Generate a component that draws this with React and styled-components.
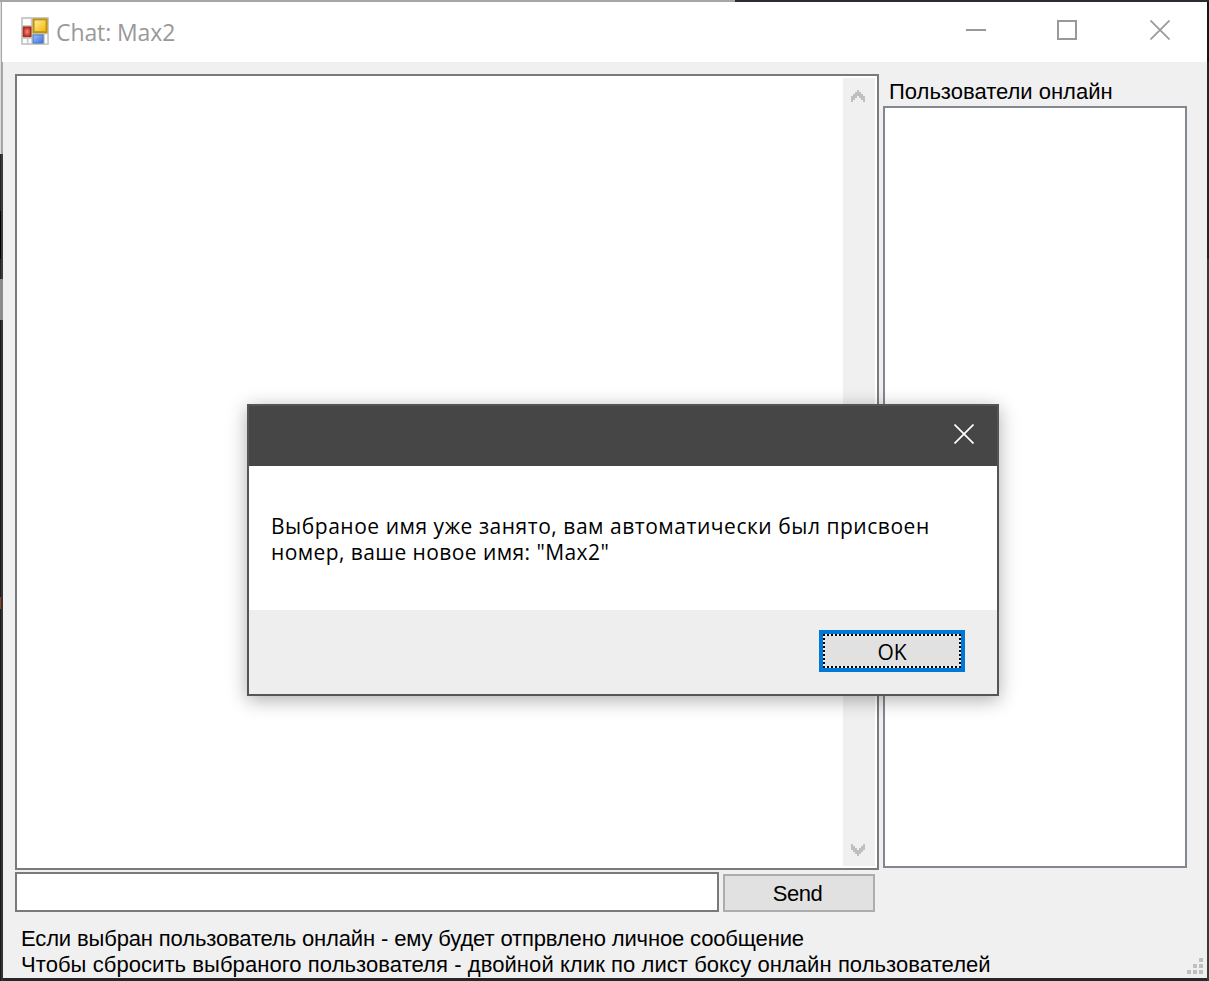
import React from "react";
import styled, { createGlobalStyle } from "styled-components";

const Global = createGlobalStyle`
  *, *::before, *::after { box-sizing: border-box; }
  html, body { margin: 0; padding: 0; overflow: hidden; background: #2b2b2b; }
  button, input { font: inherit; margin: 0; outline: none; border-radius: 0; }
`;

const Desktop = styled.div`
  position: relative;
  width: 1209px;
  height: 981px;
  padding: 2px 2px 3px 2px;
  display: flex;
  background:
    linear-gradient(90deg, #a6a6a6 0 735px, #2b2b33 735px) 0 0 / 100% 2px no-repeat,
    linear-gradient(#dcdcdc 0 154px, #262626 154px 211px, #000 211px 259px, #262626 259px 279px,
      #8c8c8c 279px 320px, #1c1c1c 320px 597px, #8f3f20 597px 609px, #1c1c1c 609px) 0 0 / 1px 100% no-repeat,
    linear-gradient(#a6a6a6 0 154px, #3c3c3c 154px 279px, #8c8c8c 279px 320px, #333 320px) 1px 0 / 2px 100% no-repeat,
    linear-gradient(#151515 0 62px, #262626 62px 259px, #3a3a3a 259px) 100% 0 / 2px 100% no-repeat,
    #262826;
`;

const Window = styled.main`
  flex: 1;
  display: flex;
  flex-direction: column;
`;

const TitleBar = styled.header`
  height: 60px;
  flex: none;
  display: flex;
  align-items: center;
  padding: 0 37px 0 19px;
  background: #fff;
`;

const AppIcon = styled.svg`
  display: block;
  flex: none;
  width: 28px;
  height: 28px;
  margin-top: -2px;
`;

const Title = styled.h1`
  flex: 1;
  margin: 0 0 0 7px;
  font: 400 23px/32px "Open Sans", "Noto Sans", sans-serif;
  letter-spacing: -0.1px;
  color: #999;
`;

const WindowButtons = styled.div`
  display: grid;
  grid-template-columns: 91px 93px 20px;
  margin-top: -4px;
`;

const Glyph = styled.svg`
  display: block;
  flex: none;
  fill: none;
  stroke: ${(p) => p.$color || "#999"};
`;

const Client = styled.section`
  flex: 1;
  margin-left: 1px;
  padding: 12px 20px 0 12px;
  background: #f0f0f0;
  display: flex;
  flex-direction: column;
  position: relative;
  font-family: "Liberation Sans", Arial, sans-serif;
  font-size: 22px;
  color: #000;
`;

const Columns = styled.div`
  display: flex;
  gap: 4px;
`;

const ChatColumn = styled.div`
  width: 864px;
  display: flex;
  flex-direction: column;
  gap: 2px;
`;

const Log = styled.div`
  height: 796px;
  border: 2px solid #7a7a7a;
  background: #fff;
  padding: 2px;
  display: flex;
  justify-content: flex-end;
`;

const ScrollBar = styled.div`
  width: 32px;
  background: #f0f0f0;
  display: flex;
  flex-direction: column;
  align-items: center;
  justify-content: space-between;
  padding: 12px 2px 10px 0;
`;

const Chevron = styled.svg`
  width: 14px;
  height: 12px;
  fill: #bfbfbf;
  transform: ${(p) => (p.$down ? "scaleY(-1)" : "none")};
`;

const SendRow = styled.div`
  display: flex;
  align-items: flex-end;
  gap: 4px;
`;

const MessageInput = styled.input`
  width: 704px;
  height: 40px;
  border: 2px solid #7a7a7a;
  background: #fff;
  padding: 0 6px;
`;

const SendButton = styled.button`
  width: 152px;
  height: 38px;
  border: 2px solid #adadad;
  background: #e1e1e1;
  padding: 2px 3px 0 0;
  letter-spacing: -0.5px;
  color: #000;
`;

const UsersColumn = styled.div`
  width: 304px;
  display: flex;
  flex-direction: column;
`;

const Label = styled.div`
  height: 32px;
  padding: 5px 0 0 6px;
  line-height: 26px;
  white-space: nowrap;
`;

const UserList = styled.div`
  height: 762px;
  border: 2px solid #828790;
  background: #fff;
`;

const Hints = styled.div`
  margin: 14px 0 0 6px;
`;

const Line = styled.p`
  margin: 0;
  line-height: 26px;
  white-space: nowrap;
  letter-spacing: ${(p) => p.$track || 0}px;
`;

const Grip = styled.svg`
  position: absolute;
  right: 4px;
  bottom: 4px;
  width: 16px;
  height: 16px;
  fill: #bfbfbf;
`;

const Dialog = styled.section`
  position: absolute;
  left: 247px;
  top: 404px;
  width: 752px;
  height: 292px;
  border: 2px solid #555;
  background: #fff;
  display: flex;
  flex-direction: column;
  box-shadow: 0 4px 18px rgba(0, 0, 0, 0.32);
  font-family: "Open Sans", "Noto Sans", sans-serif;
  font-size: 21px;
  color: #000;
`;

const DialogBar = styled.header`
  height: 60px;
  background: #464646;
  display: flex;
  align-items: center;
  justify-content: flex-end;
  padding: 0 23px 4px 0;
`;

const DialogBody = styled.div`
  flex: 1;
  padding: 47px 0 0 22px;
`;

const DialogFooter = styled.footer`
  height: 84px;
  background: #eee;
  display: flex;
  align-items: center;
  justify-content: flex-end;
  padding: 0 32px 2px 0;
`;

const OkButton = styled.button`
  width: 146px;
  height: 42px;
  border: 4px solid #0078d7;
  padding: 2px 0 0;
  color: #000;
  background:
    repeating-linear-gradient(90deg, #000 0 2px, #f0f0f0 2px 4px) 0 0 / 100% 2px no-repeat,
    repeating-linear-gradient(90deg, #000 0 2px, #f0f0f0 2px 4px) 0 100% / 100% 2px no-repeat,
    repeating-linear-gradient(#000 0 2px, #f0f0f0 2px 4px) 0 0 / 2px 100% no-repeat,
    repeating-linear-gradient(#000 0 2px, #f0f0f0 2px 4px) 100% 0 / 2px 100% no-repeat,
    #e1e1e1;
  background-origin: padding-box;
`;

function FormIcon() {
  return (
    <AppIcon viewBox="0 0 28 28">
      <defs>
        <linearGradient id="gold" x1="0" y1="0" x2="1" y2="1">
          <stop offset="0" stopColor="#fff0a8" />
          <stop offset="1" stopColor="#f3b400" />
        </linearGradient>
        <radialGradient id="red">
          <stop offset="0" stopColor="#f09080" />
          <stop offset="1" stopColor="#c02a1c" />
        </radialGradient>
        <linearGradient id="blue" x1="0" y1="0" x2="1" y2="1">
          <stop offset="0" stopColor="#9cc4ff" />
          <stop offset="1" stopColor="#3a70dc" />
        </linearGradient>
      </defs>
      <rect width="28" height="28" rx="1" fill="#cacaca" />
      <rect x="2" y="2" width="7.8" height="6" fill="#fff" />
      <rect x="2" y="22" width="3.8" height="4" fill="#fff" />
      <rect x="7.6" y="22" width="2.6" height="4" fill="#fff" />
      <rect x="23.8" y="17.5" width="2.4" height="8.8" fill="#fff" />
      <rect x="2.2" y="10" width="7.8" height="9.6" fill="url(#red)" stroke="#a3271b" />
      <rect x="12.6" y="2.4" width="13" height="12.8" fill="url(#gold)" stroke="#c0930f" strokeWidth="2" />
      <rect x="12.1" y="17.9" width="10" height="8.2" fill="url(#blue)" stroke="#5479bf" />
    </AppIcon>
  );
}

function Cross({ color }) {
  return (
    <Glyph $color={color} width="20" height="20" viewBox="0 0 20 20" strokeWidth="1.7">
      <path d="M.5 .5 19.5 19.5M19.5 .5 .5 19.5" />
    </Glyph>
  );
}

function Arrow({ down }) {
  return (
    <Chevron $down={down} viewBox="0 0 7 6">
      <path d="M3 0h1v1h1v1h1v1h1v3H6V5H5V4H4V3H3v1H2v1H1v1H0V3h1V2h1V1h1z" />
    </Chevron>
  );
}

export default function App() {
  return (
    <>
      <Global />
      <Desktop>
        <Window>
          <TitleBar>
            <FormIcon />
            <Title>Chat: Max2</Title>
            <WindowButtons>
              <Glyph width="20" height="20" strokeWidth="2"><path d="M0 10h20" /></Glyph>
              <Glyph width="20" height="20" strokeWidth="2"><path d="M1 1h18v18H1z" /></Glyph>
              <Cross />
            </WindowButtons>
          </TitleBar>
          <Client>
            <Columns>
              <ChatColumn>
                <Log>
                  <ScrollBar>
                    <Arrow />
                    <Arrow down />
                  </ScrollBar>
                </Log>
                <SendRow>
                  <MessageInput />
                  <SendButton>Send</SendButton>
                </SendRow>
              </ChatColumn>
              <UsersColumn>
                <Label>Пользователи онлайн</Label>
                <UserList />
              </UsersColumn>
            </Columns>
            <Hints>
              <Line $track={-0.14}>Если выбран пользователь онлайн - ему будет отпрвлено личное сообщение</Line>
              <Line $track={0.07}>Чтобы сбросить выбраного пользователя - двойной клик по лист боксу онлайн пользователей</Line>
            </Hints>
            <Grip viewBox="0 0 16 16" shapeRendering="crispEdges">
              <path d="M12 0h4v4h-4zM6 6h4v4H6zM12 6h4v4h-4zM0 12h4v4H0zM6 12h4v4H6zM12 12h4v4h-4z" />
            </Grip>
          </Client>
        </Window>
        <Dialog role="dialog">
          <DialogBar>
            <Cross color="#fff" />
          </DialogBar>
          <DialogBody>
            <Line $track={0.53}>Выбраное имя уже занято, вам автоматически был присвоен</Line>
            <Line $track={0.42}>номер, ваше новое имя: "Max2"</Line>
          </DialogBody>
          <DialogFooter>
            <OkButton>OK</OkButton>
          </DialogFooter>
        </Dialog>
      </Desktop>
    </>
  );
}
